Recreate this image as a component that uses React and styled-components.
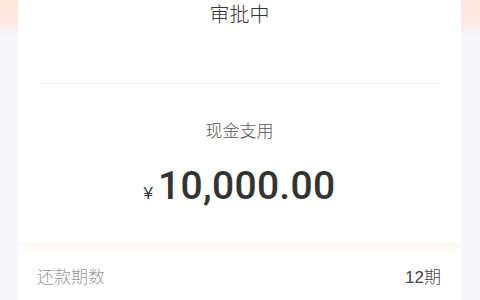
import styled, { createGlobalStyle } from "styled-components";

const GlobalStyle = createGlobalStyle`
  html, body {
    margin: 0;
    padding: 0;
    height: 300px;
    overflow: hidden;
    font-family: "Liberation Sans", "Noto Sans CJK SC", sans-serif;
  }
`;

export default function App() {
  return (
    <Page>
      <GlobalStyle />
      <Card>
        <Status>审批中</Status>
        <Divider />
        <Summary>
          <Label>现金支用</Label>
          <Amount>
            <Currency>¥</Currency>
            <Number>10,000.00</Number>
          </Amount>
        </Summary>
        <Details>
          <Row>
            <RowLabel>还款期数</RowLabel>
            <RowValue>12期</RowValue>
          </Row>
        </Details>
      </Card>
    </Page>
  );
}

const Page = styled.div`
  width: 480px;
  height: 300px;
  box-sizing: border-box;
  padding: 0 19px 0 18px;
  background: linear-gradient(to bottom, #fde5dc 0px, #fde9e2 22px, #f5f7fa 36px, #f5f7fa 100%);
`;

const Card = styled.div`
  background: #ffffff;
  height: 300px;
  display: flex;
  flex-direction: column;
`;

const Status = styled.div`
  box-sizing: border-box;
  padding-top: 1px;
  height: 83px;
  text-align: center;
  font-size: 20px;
  font-weight: 300;
  line-height: 28px;
  color: #333333;
`;

const Divider = styled.div`
  height: 1px;
  margin: 0 20px 0 19px;
  background: #f3f3f3;
`;

const Summary = styled.div`
  height: 159px;
  display: flex;
  flex-direction: column;
  align-items: center;
  padding-top: 36px;
  box-sizing: border-box;
`;

const Label = styled.div`
  font-size: 17px;
  font-weight: 300;
  line-height: 24px;
  color: #555555;
`;

const Amount = styled.div`
  margin-top: 20px;
  display: flex;
  align-items: baseline;
  color: #333333;
`;

const Currency = styled.span`
  font-size: 17px;
  margin-right: 5px;
`;

const Number = styled.span`
  font-family: Roboto, "Liberation Sans", sans-serif;
  font-weight: 500;
  font-size: 39px;
  line-height: 44px;
  letter-spacing: 0.3px;
`;

const Details = styled.div`
  flex: 1;
  background: linear-gradient(to bottom, #fff6f2 0px, #fffaf8 6px, #ffffff 14px);
  padding: 0 20px 0 19px;
`;

const Row = styled.div`
  display: flex;
  justify-content: space-between;
  align-items: center;
  padding-top: 23px;
  font-size: 17px;
  font-weight: 300;
  line-height: 24px;
`;

const RowLabel = styled.span`
  color: #999999;
`;

const RowValue = styled.span`
  color: #444444;
`;
